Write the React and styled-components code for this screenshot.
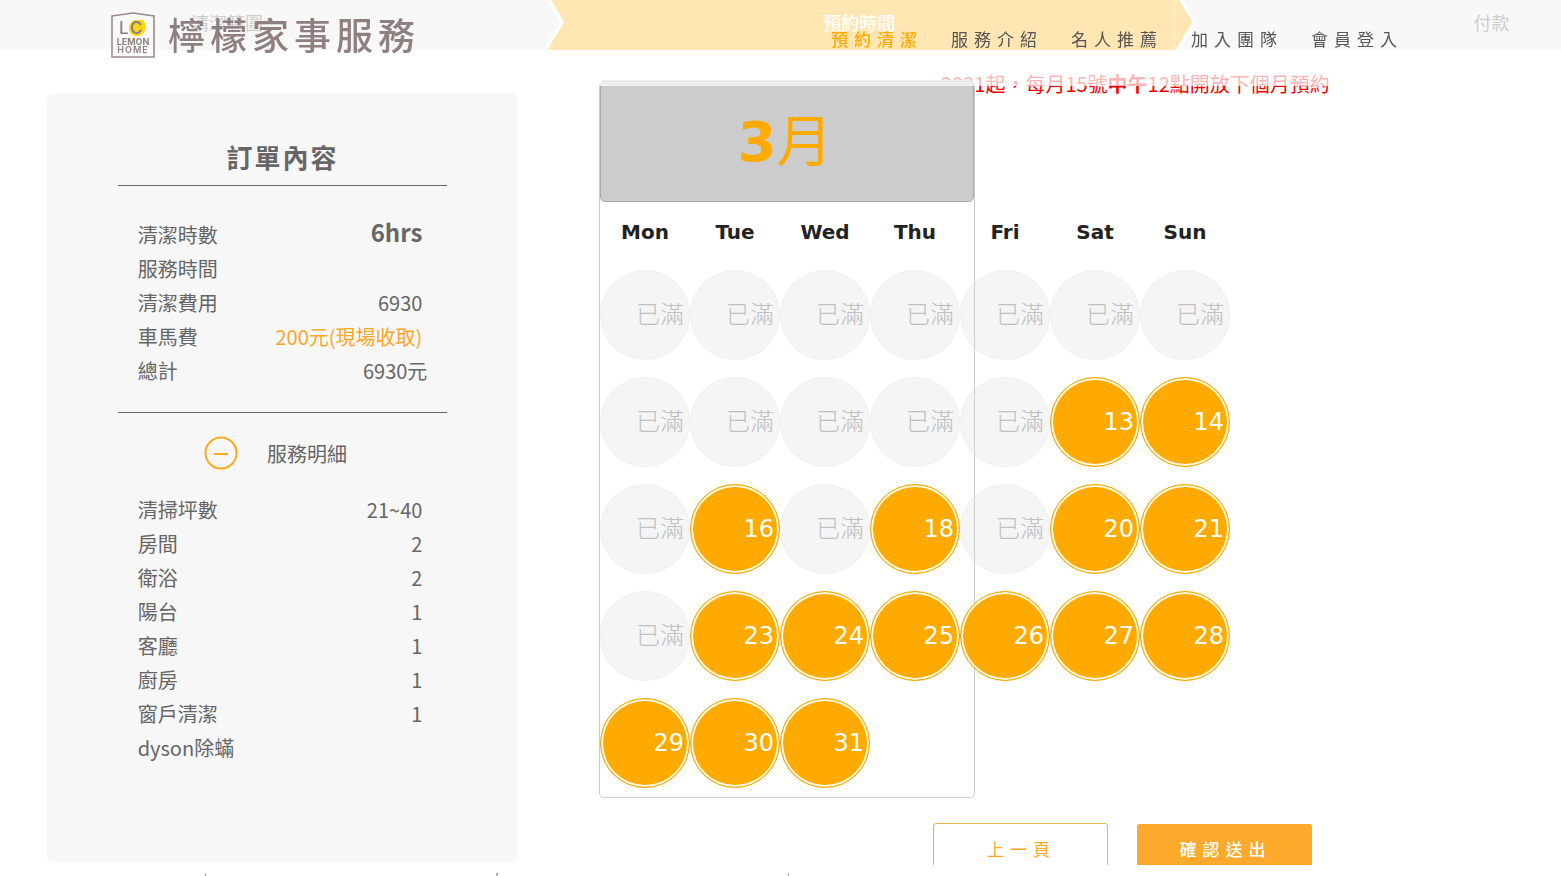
import React from "react";
import styled, { createGlobalStyle } from "styled-components";

const GlobalStyle = createGlobalStyle`
  * {
    box-sizing: border-box;
  }
  body {
    margin: 0;
    background: #fff;
    color: #666;
    font-family: "Noto Sans CJK TC", sans-serif;
    font-size: 20px;
  }
`;

const Header = styled.header`
  position: fixed;
  top: 0;
  left: 0;
  right: 0;
  z-index: 10;
  height: 86px;
  padding: 12px 158px 0 111px;
  display: flex;
  justify-content: space-between;
  align-items: flex-start;
  background: rgba(255, 255, 255, 0.7);
`;

const Brand = styled.a`
  display: flex;
  align-items: flex-start;
  gap: 13px;
  color: #8f7f7f;
  font-size: 37px;
  font-weight: 500;
  line-height: 44px;
  letter-spacing: 5px;
  text-decoration: none;
  white-space: nowrap;
`;

const Nav = styled.nav`
  display: flex;
  gap: 28px;
  padding-top: 14px;
`;

const NavLink = styled.a`
  color: ${(p) => (p.$active ? "#ffaa00" : "#555")};
  font-size: 17px;
  font-weight: ${(p) => (p.$active ? 500 : 400)};
  line-height: 26px;
  letter-spacing: 6px;
  text-decoration: none;
  white-space: nowrap;
`;

const Steps = styled.ol`
  display: flex;
  height: 50px;
  margin: 0;
  padding: 0;
  overflow: hidden;
  list-style: none;
`;

const Step = styled.li`
  position: relative;
  z-index: ${(p) => p.$level};
  flex: 0 0 40.5%;
  line-height: 44px;
  text-align: center;
  font-size: 18px;
  font-weight: ${(p) => (p.$active ? 500 : 400)};
  color: ${(p) => (p.$active ? "#fff" : "#555")};
  background: ${(p) => (p.$active ? "#ffaa00" : "#e8e8e8")};

  &:first-child {
    margin-left: -5.7%;
  }

  &::before,
  &::after {
    content: "";
    position: absolute;
    top: -6px;
    left: calc(100% - 1px);
    width: 22px;
    height: 56px;
    background: #fff;
    clip-path: polygon(0 0, 5px 0, 100% 50%, 5px 100%, 0 100%);
  }
  &::after {
    width: 18px;
    background: ${(p) => (p.$active ? "#ffaa00" : "#e8e8e8")};
    clip-path: polygon(0 0, 1px 0, 100% 50%, 1px 100%, 0 100%);
  }
`;

const Main = styled.main`
  display: grid;
  grid-template-columns: 471fr 962fr;
  gap: 81px;
  padding-left: 47px;
`;

const Order = styled.aside`
  display: flex;
  flex-direction: column;
  align-items: center;
  margin-top: 44px;
  padding: 43px 0 97px;
  align-self: start;
  background: #f7f7f7;
  border-radius: 6px;
`;

const OrderTitle = styled.h2`
  width: 70%;
  margin: 0;
  padding-bottom: 8px;
  border-bottom: 1px solid #666;
  text-align: center;
  font-size: 26px;
  font-weight: 700;
  line-height: 40px;
  letter-spacing: 2px;
`;

const OrderList = styled.dl`
  width: 70%;
  margin: 0;
  padding: ${(p) => (p.$summary ? "32px 20px 24px" : "0 20px")};
  border-bottom: ${(p) => (p.$summary ? "1px solid #666" : "0")};
`;

const OrderRow = styled.div`
  display: flex;
  justify-content: space-between;
  height: 34px;
  line-height: 34px;
  white-space: nowrap;
`;

const Label = styled.dt`
  margin: 0;
`;

const Value = styled.dd`
  margin: 0 ${(p) => (p.$total ? "0" : "5px")} 0 0;
  color: ${(p) => (p.$accent ? "#fba629" : "inherit")};
  font-size: ${(p) => (p.$large ? "24px" : "20px")};
  font-weight: ${(p) => (p.$large ? 700 : 400)};
  line-height: ${(p) => (p.$large ? "28px" : "34px")};
`;

const DetailToggle = styled.button`
  display: flex;
  align-items: center;
  gap: 29px;
  height: 80px;
  margin-right: 14px;
  padding: 0;
  border: 0;
  background: none;
  color: inherit;
  font: inherit;
`;

const Booking = styled.section`
  padding-top: 20px;
`;

const Notice = styled.p`
  margin: 0;
  padding-left: 342px;
  color: #f00000;
  line-height: 28px;
  white-space: nowrap;
`;

const Calendar = styled.div`
  position: relative;
  width: 376px;
  margin-top: -18px;
  border: 1px solid #ccc;
  border-radius: 5px;
  font-family: "DejaVu Sans", "Noto Sans CJK TC", sans-serif;
`;

const Month = styled.h1`
  height: 121px;
  margin: 0;
  padding-right: 4px;
  border: 1px solid #aaa;
  border-radius: 5px;
  background: #ccc;
  color: #ffaa00;
  font-size: 56px;
  font-weight: 700;
  line-height: 120px;
  text-align: center;
`;

const MonthUnit = styled.span`
  font-weight: 400;
`;

const Days = styled.table`
  width: 630px;
  table-layout: fixed;
  border-collapse: collapse;
`;

const Weekday = styled.th`
  height: 60px;
  padding: 0;
  color: #222;
  font-size: 20px;
  font-weight: 700;
`;

const DayCell = styled.td`
  height: 107px;
  padding: 8px 0 0;
  vertical-align: top;
`;

const Day = styled.button`
  display: block;
  width: 90px;
  height: 90px;
  padding: 0 5px 0 0;
  border: 1px solid #f5a800;
  border-radius: 50%;
  background: #ffaa00;
  box-shadow: inset 0 0 0 2px #fffbe4;
  color: #fff;
  font-family: inherit;
  font-size: 24px;
  text-align: right;

  &:disabled {
    padding-bottom: 6px;
    border-color: rgba(200, 200, 200, 0.1);
    background: rgba(220, 220, 220, 0.28);
    box-shadow: none;
    color: #c0c0c0;
    font-weight: 300;
  }
`;

const Actions = styled.div`
  display: flex;
  gap: 29px;
  margin: 25px 0 0 334px;
`;

const ActionButton = styled.button`
  width: 175px;
  height: 52px;
  padding: 0 0 2px 2px;
  border: 1px solid ${(p) => (p.$primary ? "#fff" : "#e8b840")};
  border-width: ${(p) => (p.$primary ? "1px 0 0" : "1px")};
  border-radius: 3px;
  background: ${(p) => (p.$primary ? "#fda92b" : "#fff")};
  color: ${(p) => (p.$primary ? "#fff" : "#fba629")};
  font-family: inherit;
  font-size: 17px;
  font-weight: ${(p) => (p.$primary ? 500 : 400)};
  letter-spacing: 6px;
`;

const BottomBar = styled.footer`
  position: fixed;
  left: 0;
  right: 0;
  bottom: 0;
  z-index: 10;
  display: flex;
  height: 11px;
  padding: 8px 0 0 205px;
  background: #fff;
`;

const BottomCell = styled.div`
  width: 292px;
  border: solid #aaa;
  border-width: 0 1px;
`;

const steps = ["清潔範圍", "預約時間", "付款"];
const links = ["預約清潔", "服務介紹", "名人推薦", "加入團隊", "會員登入"];
const weekdays = ["Mon", "Tue", "Wed", "Thu", "Fri", "Sat", "Sun"];

const summary = [
  { label: "清潔時數", value: "6hrs", large: true },
  { label: "服務時間", value: "" },
  { label: "清潔費用", value: "6930" },
  { label: "車馬費", value: "200元(現場收取)", accent: true },
  { label: "總計", value: "6930元", total: true },
];

const details = [
  { label: "清掃坪數", value: "21~40" },
  { label: "房間", value: "2" },
  { label: "衛浴", value: "2" },
  { label: "陽台", value: "1" },
  { label: "客廳", value: "1" },
  { label: "廚房", value: "1" },
  { label: "窗戶清潔", value: "1" },
  { label: "dyson除蟎", value: "" },
];

const openDays = [13, 14, 16, 18, 20, 21, 23, 24, 25, 26, 27, 28, 29, 30, 31];
const weeks = [1, 8, 15, 22, 29].map((first) =>
  weekdays.map((_, i) => first + i).filter((day) => day <= 31)
);

function Logo() {
  return (
    <svg width="44" height="46" viewBox="0 0 44 46" aria-hidden="true">
      <path d="M1 4 L22 1 L43 4 V45 H1 Z" fill="none" stroke="#9a8c8c" strokeWidth="1.6" />
      <path d="M18 16 C18 10 23 7 28 8 L32 8 L34 11 C36 17 33 23 27 24 C22 25 18 21 18 16 Z" fill="#fbd716" />
      <g fill="#8f7f7f" fontFamily="Inter, sans-serif" letterSpacing="0">
        <text x="8" y="22" fontSize="17" fontWeight="500">L</text>
        <text x="19" y="22" fontSize="17" fontWeight="600">C</text>
        <text x="22" y="33" fontSize="9" fontWeight="700" textAnchor="middle">LEMON</text>
        <text x="22" y="41" fontSize="9" fontWeight="600" letterSpacing="1" textAnchor="middle">HOME</text>
      </g>
    </svg>
  );
}

function Rows({ items }) {
  return items.map((item) => (
    <OrderRow key={item.label}>
      <Label>{item.label}</Label>
      <Value $large={item.large} $accent={item.accent} $total={item.total}>
        {item.value}
      </Value>
    </OrderRow>
  ));
}

function App() {
  return (
    <>
      <GlobalStyle />
      <Header>
        <Brand href="#">
          <Logo />
          檸檬家事服務
        </Brand>
        <Nav>
          {links.map((link, i) => (
            <NavLink key={link} href="#" $active={i === 0}>{link}</NavLink>
          ))}
        </Nav>
      </Header>
      <Steps>
        {steps.map((step, i) => (
          <Step key={step} $active={i === 1} $level={steps.length - i}>{step}</Step>
        ))}
      </Steps>
      <Main>
        <Order>
          <OrderTitle>訂單內容</OrderTitle>
          <OrderList $summary>
            <Rows items={summary} />
          </OrderList>
          <DetailToggle type="button" aria-expanded="true">
            <svg width="34" height="34" viewBox="0 0 34 34" fill="none" stroke="#fbab1c" strokeWidth="2" aria-hidden="true">
              <circle cx="17" cy="17" r="15.5" />
              <path d="M10 18 H24" />
            </svg>
            服務明細
          </DetailToggle>
          <OrderList>
            <Rows items={details} />
          </OrderList>
        </Order>
        <Booking>
          <Notice>2021起，每月15號<b>中午</b>12點開放下個月預約</Notice>
          <Calendar>
            <Month>3<MonthUnit>月</MonthUnit></Month>
            <Days>
              <thead>
                <tr>
                  {weekdays.map((name) => (
                    <Weekday key={name} scope="col">{name}</Weekday>
                  ))}
                </tr>
              </thead>
              <tbody>
                {weeks.map((week) => (
                  <tr key={week[0]}>
                    {week.map((day) => (
                      <DayCell key={day}>
                        <Day type="button" disabled={!openDays.includes(day)}>
                          {openDays.includes(day) ? day : "已滿"}
                        </Day>
                      </DayCell>
                    ))}
                  </tr>
                ))}
              </tbody>
            </Days>
          </Calendar>
          <Actions>
            <ActionButton type="button">上一頁</ActionButton>
            <ActionButton type="button" $primary>確認送出</ActionButton>
          </Actions>
        </Booking>
      </Main>
      <BottomBar>
        <BottomCell />
        <BottomCell />
      </BottomBar>
    </>
  );
}

export default App;
